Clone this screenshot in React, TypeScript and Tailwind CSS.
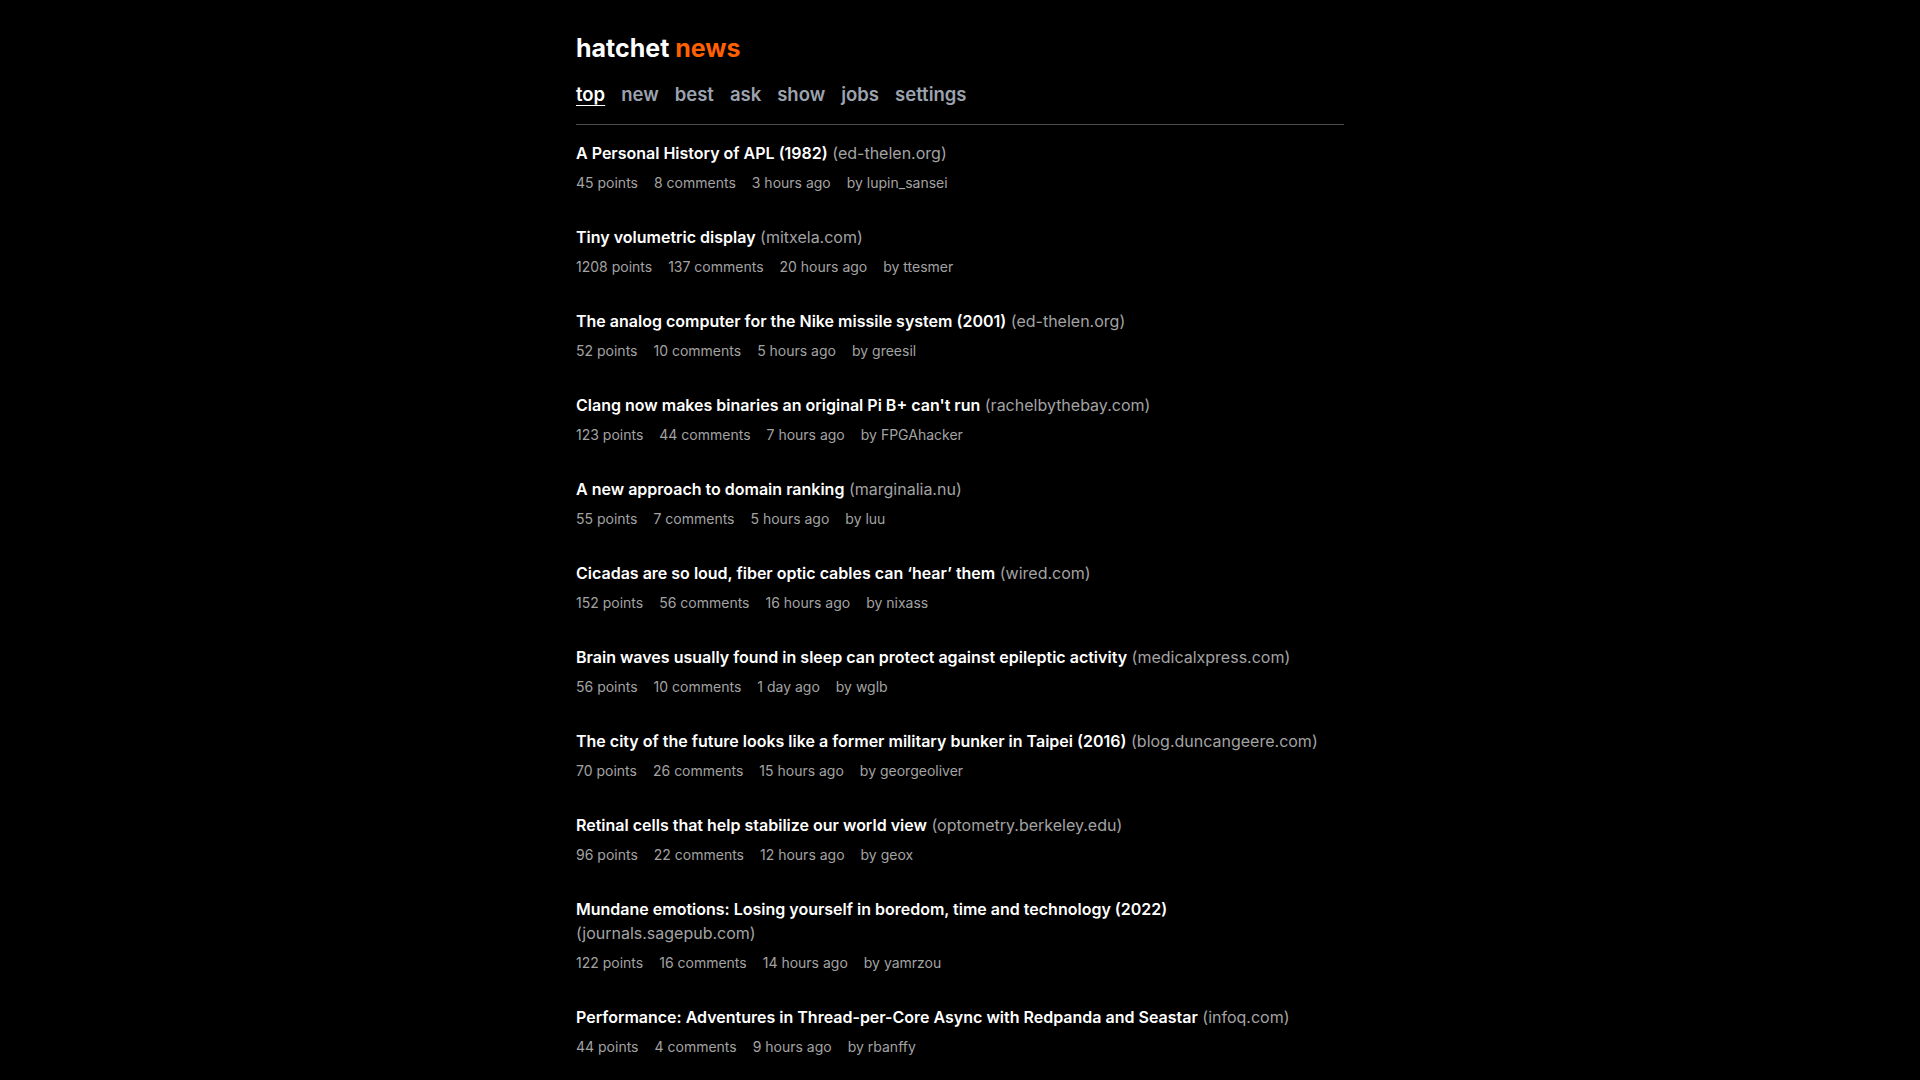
import React from "react";

type Item = {
  title: string;
  domain: string;
  points: number;
  comments: number;
  ago: string;
  by: string;
};

const items: Item[] = [
  { title: "A Personal History of APL (1982)", domain: "ed-thelen.org", points: 45, comments: 8, ago: "3 hours ago", by: "lupin_sansei" },
  { title: "Tiny volumetric display", domain: "mitxela.com", points: 1208, comments: 137, ago: "20 hours ago", by: "ttesmer" },
  { title: "The analog computer for the Nike missile system (2001)", domain: "ed-thelen.org", points: 52, comments: 10, ago: "5 hours ago", by: "greesil" },
  { title: "Clang now makes binaries an original Pi B+ can't run", domain: "rachelbythebay.com", points: 123, comments: 44, ago: "7 hours ago", by: "FPGAhacker" },
  { title: "A new approach to domain ranking", domain: "marginalia.nu", points: 55, comments: 7, ago: "5 hours ago", by: "luu" },
  { title: "Cicadas are so loud, fiber optic cables can \u2018hear\u2019 them", domain: "wired.com", points: 152, comments: 56, ago: "16 hours ago", by: "nixass" },
  { title: "Brain waves usually found in sleep can protect against epileptic activity", domain: "medicalxpress.com", points: 56, comments: 10, ago: "1 day ago", by: "wglb" },
  { title: "The city of the future looks like a former military bunker in Taipei (2016)", domain: "blog.duncangeere.com", points: 70, comments: 26, ago: "15 hours ago", by: "georgeoliver" },
  { title: "Retinal cells that help stabilize our world view", domain: "optometry.berkeley.edu", points: 96, comments: 22, ago: "12 hours ago", by: "geox" },
  { title: "Mundane emotions: Losing yourself in boredom, time and technology (2022)", domain: "journals.sagepub.com", points: 122, comments: 16, ago: "14 hours ago", by: "yamrzou" },
  { title: "Performance: Adventures in Thread-per-Core Async with Redpanda and Seastar", domain: "infoq.com", points: 44, comments: 4, ago: "9 hours ago", by: "rbanffy" },
];

const nav = ["top", "new", "best", "ask", "show", "jobs", "settings"];

export default function App() {
  return (
    <div className="min-h-screen bg-black text-white" style={{ fontFamily: "Inter, 'Noto Sans', sans-serif" }}>
      <div className="mx-auto w-[768px] pt-8">
        <header className="border-b border-[#4b4b4b] pb-4">
          <h1 className="text-[25px] font-bold leading-8">
            <span className="text-white">hatchet </span>
            <span className="text-[#ff6000]">news</span>
          </h1>
          <nav className="mt-4 flex gap-4 text-[18.5px] font-semibold leading-7">
            {nav.map((n, i) => (
              <a
                key={n}
                className={i === 0 ? "text-white underline underline-offset-4" : "text-[#9ca3af]"}
              >
                {n}
              </a>
            ))}
          </nav>
        </header>
        <ul>
          {items.map((it) => (
            <li key={it.title} className="py-4">
              <div className="text-base leading-6">
                <span className="font-semibold text-white">{it.title}</span>{" "}
                <span className="text-[#a3a3a3]">({it.domain})</span>
              </div>
              <div className="mt-2 flex gap-4 text-sm leading-5 text-[#a3a3a3]">
                <span>{it.points} points</span>
                <span>{it.comments} comments</span>
                <span>{it.ago}</span>
                <span>by {it.by}</span>
              </div>
            </li>
          ))}
        </ul>
      </div>
    </div>
  );
}
